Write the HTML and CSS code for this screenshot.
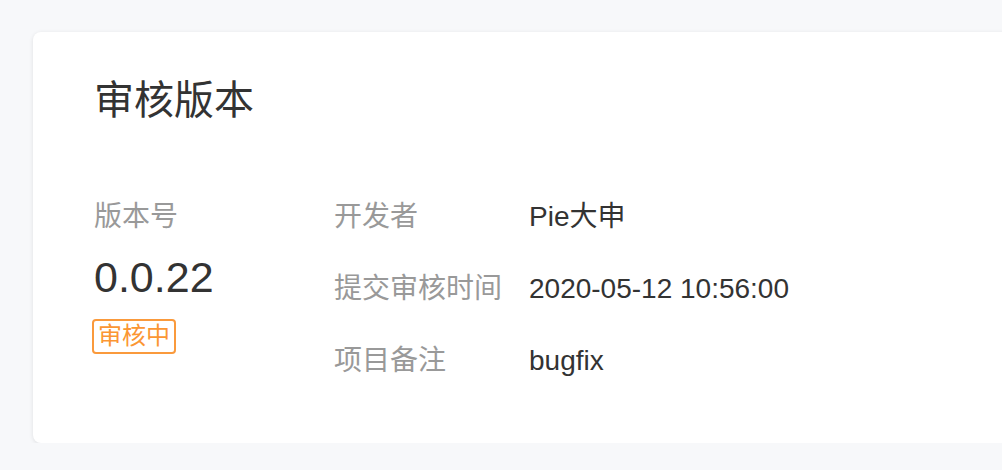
FILE: index.html
```html
<!DOCTYPE html>
<html lang="zh-CN">
<head>
<meta charset="utf-8">
<title>审核版本</title>
<link rel="stylesheet" href="styles.css">
</head>
<body>
<div class="page">
  <section class="card">
    <h1 class="card-title">审核版本</h1>
    <div class="card-body">
      <div class="version">
        <div class="label">版本号</div>
        <div class="version-number">0.0.22</div>
        <span class="tag">审核中</span>
      </div>
      <dl class="details">
        <div class="row"><dt class="label">开发者</dt><dd class="value">Pie大申</dd></div>
        <div class="row"><dt class="label">提交审核时间</dt><dd class="value">2020-05-12 10:56:00</dd></div>
        <div class="row"><dt class="label">项目备注</dt><dd class="value">bugfix</dd></div>
      </dl>
    </div>
  </section>
</div>
</body>
</html>
```
FILE: styles.css
```css
html, body {
  margin: 0;
  padding: 0;
  background: #f7f8fa;
  overflow: hidden;
}
body {
  font-family: "Liberation Sans", "Noto Sans CJK SC", sans-serif;
  color: #333;
}
.page {
  padding: 32px 0 0 33px;
}
.card {
  width: 1000px;
  background: #fff;
  border-radius: 8px;
  box-shadow: 0 1px 4px rgba(0, 0, 0, 0.1);
  padding: 48px 62px 68px 61px;
  box-sizing: border-box;
}
.card-title {
  margin: 0;
  font-size: 40px;
  line-height: 40px;
  font-weight: 400;
  color: #333;
}
.card-body {
  display: flex;
  margin-top: 83px;
}
.version {
  width: 240px;
  display: flex;
  flex-direction: column;
  align-items: flex-start;
}
.label {
  font-size: 28px;
  line-height: 28px;
  color: #999;
}
.version-number {
  margin-top: 25px;
  font-size: 43px;
  line-height: 43px;
  color: #333;
}
.tag {
  margin: 20px 0 0 -2px;
  border: 2px solid #fa9a3c;
  border-radius: 4px;
  padding: 3px 4px 4px;
  font-size: 24px;
  line-height: 24px;
  color: #fb9633;
}
.details {
  margin: 0;
  display: flex;
  flex-direction: column;
  gap: 44px;
}
.row {
  display: flex;
}
.row .label {
  width: 195px;
}
.value {
  margin: 0;
  font-size: 28px;
  line-height: 28px;
  color: #333;
}
```
